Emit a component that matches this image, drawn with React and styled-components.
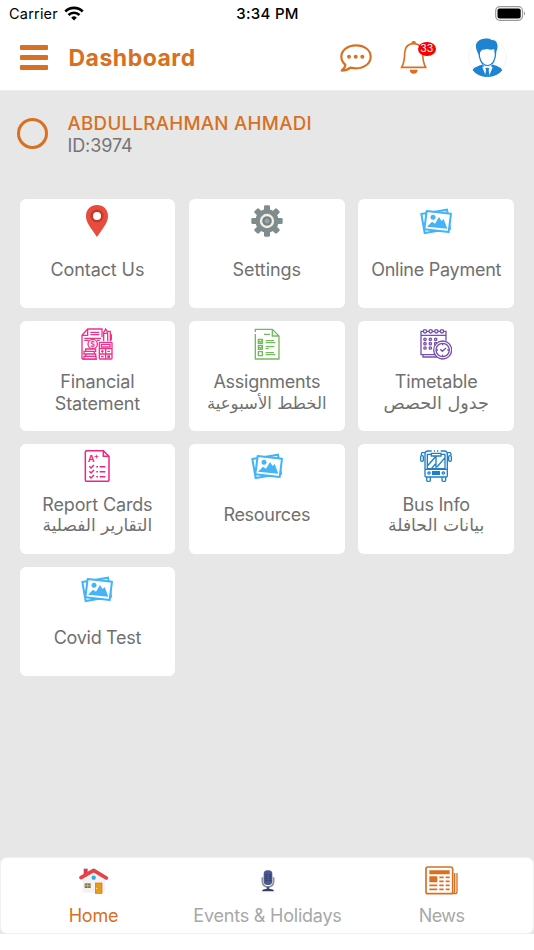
import React from 'react';
import styled, { createGlobalStyle } from 'styled-components';

const GlobalStyle = createGlobalStyle`
  * {
    box-sizing: border-box;
  }

  body {
    margin: 0;
    background: #fff;
    font-family: Inter, 'DejaVu Sans', sans-serif;
  }

  svg {
    display: block;
    flex-shrink: 0;
  }
`;

const orange = '#d77023';
const sky = '#45b3f7';

const Screen = styled.div`
  width: 534px;
  height: 950px;
  display: flex;
  flex-direction: column;
  background: #fff;
  overflow: hidden;
`;

const StatusBar = styled.div`
  height: 27px;
  padding: 0 8px 0 9px;
  display: grid;
  grid-template-columns: 1fr auto 1fr;
  align-items: center;
  font-size: 15px;
  color: #000;
`;

const Carrier = styled.div`
  display: flex;
  align-items: center;
  gap: 6px;
  font-size: 14.5px;
  letter-spacing: 0.2px;
`;

const Clock = styled.div`
  font-weight: 500;
  letter-spacing: 0.3px;
`;

const BatterySlot = styled.div`
  display: flex;
  justify-content: flex-end;
`;

const Header = styled.header`
  height: 64px;
  padding: 0 27.5px 2px 19.5px;
  display: flex;
  align-items: center;
  border-bottom: 1px solid #efefef;
`;

const MenuButton = styled.div`
  display: flex;
  flex-direction: column;
  gap: 5.4px;
  width: 28.5px;
  margin-right: 20.5px;

  span {
    height: 4.7px;
    border-radius: 1px;
    background: ${orange};
  }
`;

const Title = styled.h1`
  flex: 1;
  margin: 0;
  font-size: 23px;
  font-weight: 700;
  line-height: 28px;
  letter-spacing: 0.5px;
  color: ${orange};
`;

const BellButton = styled.div`
  position: relative;
  margin: 0 40px 0 27.5px;
`;

const Badge = styled.span`
  position: absolute;
  left: 18.5px;
  top: 0.5px;
  width: 17.5px;
  height: 14px;
  border-radius: 50%;
  background: #f90000;
  color: #fff;
  font-size: 10.5px;
  line-height: 14px;
  text-align: center;
`;

const Main = styled.main`
  flex: 1;
  background: #e7e7e7;
`;

const Profile = styled.div`
  height: 107.8px;
  padding: 20.5px 17px 0;
  display: flex;
  gap: 19.5px;
`;

const Ring = styled.div`
  width: 31px;
  height: 31px;
  margin-top: 6px;
  border: 3px solid ${orange};
  border-radius: 50%;
`;

const Name = styled.div`
  font-size: 18.7px;
  font-weight: 500;
  line-height: 23px;
  letter-spacing: 0.3px;
  color: ${orange};
`;

const StudentId = styled.div`
  font-size: 18px;
  line-height: 22px;
  letter-spacing: -0.1px;
  color: #757575;
`;

const Tiles = styled.div`
  padding: 0 19.5px;
  display: grid;
  grid-template-columns: repeat(3, 155.8px);
  grid-auto-rows: 109.6px;
  gap: 13px 13.6px;
`;

const Tile = styled.div`
  padding-top: 6.2px;
  display: flex;
  flex-direction: column;
  align-items: center;
  border-radius: 6px;
  background: #fff;
`;

const TileLabel = styled.div`
  height: 66px;
  display: flex;
  flex-direction: column;
  justify-content: center;
  text-align: center;
  font-size: 18px;
  line-height: 21.5px;
  letter-spacing: ${({ $tracking }) => $tracking || 0}px;
  color: #707070;
`;

const Arabic = styled.span`
  height: 21.5px;
  font-family: 'DejaVu Sans', sans-serif;
  font-size: ${({ $size }) => $size || 17}px;
  letter-spacing: 0;
  white-space: nowrap;
`;

const TabBar = styled.nav`
  height: 77.5px;
  margin-bottom: 16px;
  background: #e7e7e7;
`;

const TabSheet = styled.div`
  height: 100%;
  padding: 0 4.5px 0 5.5px;
  display: grid;
  grid-template-columns: repeat(3, 1fr);
  border: 1px solid #f1f1f1;
  border-radius: 7px;
  background: #fff;
`;

const Tab = styled.div`
  display: flex;
  flex-direction: column;
  align-items: center;
  font-size: 18px;
  line-height: 22px;
  letter-spacing: ${({ $tracking }) => $tracking || 0}px;
  color: ${({ $active }) => ($active ? orange : '#a8a8a8')};
`;

const TabIcon = styled.div`
  height: 47px;
  padding-bottom: 1px;
  display: flex;
  align-items: center;
`;

const Wifi = () => (
  <svg width="20" height="15" viewBox="0 0 20 15" fill="none" stroke="#000" strokeWidth="2.7">
    <path d="M1.3 5.5a12.4 12.4 0 0 1 17.4 0" />
    <path d="M4.5 9a7.9 7.9 0 0 1 11 0" />
    <path d="M7.2 11.7a4 4 0 0 1 5.6 0L10 14.5z" fill="#000" stroke="none" />
  </svg>
);

const Battery = () => (
  <svg width="31" height="15" viewBox="0 0 31 15">
    <rect x=".7" y=".7" width="26.8" height="13.6" rx="4" fill="none" stroke="#999" strokeWidth="1.2" />
    <rect x="2.5" y="2.5" width="23.2" height="10" rx="2" fill="#000" />
    <path d="M29 5.3q2 2.2 0 4.4z" fill="#888" />
  </svg>
);

const Chat = () => (
  <svg width="32" height="28" viewBox="0 0 96 84" fill={orange}>
    <path
      d="M48 4C23 4 4 19 4 38c0 10 5 18 12 24 0 7-5 13-11 18 11 0 19-3 26-9 5 1 11 2 17 2 25 0 44-15 44-35S73 4 48 4z"
      fill="none"
      stroke={orange}
      strokeWidth="6.5"
      strokeLinejoin="round"
    />
    <circle cx="27" cy="38" r="6" />
    <circle cx="47" cy="38" r="6" />
    <circle cx="67" cy="38" r="6" />
  </svg>
);

const Bell = () => (
  <svg width="28" height="33" viewBox="0 0 84 99">
    <path
      d="M5 79c7-13 9-24 9-43C15 18 25 8 41 8s26 10 27 28c0 19 2 30 9 43z"
      fill="none"
      stroke={orange}
      strokeWidth="5"
    />
    <path d="M34 7a7 7 0 0 1 14 0z" fill={orange} />
    <path d="M29 86h24q-1 12-12 12T29 86z" fill={orange} />
  </svg>
);

const Avatar = () => (
  <svg width="39" height="39" viewBox="0 0 117 117">
    <circle cx="58" cy="58" r="56" fill="#fff" stroke="#ededed" strokeWidth="2" />
    <path
      d="M31 48C23 32 20 20 29 11 39 1 60-1 71 6c15-2 22 15 15 32l-5 12-5-15c-13 3-27-2-35 1l-5 14z"
      fill="#1e83d0"
    />
    <path d="M33 43c0 20 8 39 25 39s25-19 25-39" fill="none" stroke="#1e83d0" strokeWidth="4" />
    <path d="M36 42q9-8 21-9 12 4 22 1v14q-2 32-20 32T36 49z" fill="#fff" />
    <path d="M14 97c3-9 15-12 31-18l13 10 13-10c18 6 28 9 32 18-22 26-66 28-89 0z" fill="#1e83d0" />
    <path d="M45 79l-2 9 11 27h9l11-27-3-9-13 10z" fill="#fff" />
    <path d="M52 90h12l-2 6 3 19H51l3-19zM45 80l-4 9 8-5zM72 80l4 9-8-5z" fill="#1e83d0" />
  </svg>
);

const TileSvg = ({ children, ...rest }) => (
  <svg width="32" height="32" viewBox="0 0 96 96" {...rest}>
    {children}
  </svg>
);

const Pin = () => (
  <TileSvg>
    <path d="M48 0C29 0 15 14 15 32c0 16 7 26 19 44l14 20 14-20c12-18 19-28 19-44C81 14 67 0 48 0z" fill="#e74c3c" />
    <circle cx="48" cy="33" r="19.5" fill="#c1392c" />
    <circle cx="48" cy="33" r="12" fill="#fff" />
  </TileSvg>
);

const Gear = () => (
  <TileSvg fill="#7f8c8d">
    {[0, 45, 90, 135].map(angle => (
      <rect key={angle} x="39" y="1" width="18" height="94" rx="4" transform={`rotate(${angle} 48 48)`} />
    ))}
    <circle cx="48" cy="48" r="35" />
    <circle cx="48" cy="48" r="18" fill="none" stroke="#f3efe2" strokeWidth="7" />
    <circle cx="48" cy="48" r="12" fill="#737f82" />
    <circle cx="48" cy="48" r="7.5" fill="#95a5a5" />
  </TileSvg>
);

const Photos = () => (
  <TileSvg fill="none" stroke={sky} strokeWidth="6">
    <path d="M4 27L81 14l9 57-76 13z" />
    <path d="M20 18l73 8-7 55-73-8z" fill="#fff" strokeLinejoin="round" />
    <circle cx="39" cy="37" r="7.5" fill={sky} stroke="none" />
    <path d="M21 65l15-15 9 6 12-20 8 12 6-6 11 29z" fill={sky} stroke="none" />
  </TileSvg>
);

const Finance = () => (
  <TileSvg fill="none" stroke="#f0318c" strokeWidth="4">
    <path d="M3 93V22L20 3h43v24M3 22h17V3M3 93h45M28 13h27M28 20h27M10 31h50M10 37h13M48 37h8" />
    <circle cx="35" cy="48" r="14" fill="#fff" />
    <text x="35" y="56" fontSize="22" fontWeight="600" fill="#f0318c" stroke="none" textAnchor="middle">$</text>
    <path d="M14 63h30v7H14zM9 70h31v8H9zM14 78h30v7H14zM9 85h36v8H9z" fill="#fff" />
    <path d="M68 40V13l6-10 6 10v27M80 10h8v30M68 16h12M91 19v18" />
    <rect x="55" y="43" width="38" height="50" rx="2" fill="#fff" />
    <path d="M61 49h26v8H61zM55 62h38M74 62v31M55 78h38M60 70h8M64 66v8M79 70h8M60 86h8M79 84h8M79 88h8" />
  </TileSvg>
);

const Checklist = () => (
  <TileSvg fill="none" stroke="#73ba5d" strokeWidth="4">
    <path d="M13 12V4h51l20 20v69H13V18M64 4v20h20M39 19h18" />
    <path d="M22 34h12v12H22zM22 52h12v12H22zM22 71h12v12H22z" />
    <path d="M23 38l5 5 8-9M23 56l5 5 8-9M44 38h25M44 44h29M44 56h26M44 62h9M44 74h25M44 80h29" />
  </TileSvg>
);

const Calendar = () => (
  <TileSvg fill="none" stroke="#7650ad" strokeWidth="4">
    <path d="M78 38V10H3v70h46M3 22h75M9 81v6h47" />
    {[15, 32, 49, 66].map(x => (
      <circle key={x} cx={x} cy="10" r="5" fill="#fff" />
    ))}
    {[34, 47, 60].map(y =>
      [15, 31, 47].map(x => <circle key={`${x}-${y}`} cx={x} cy={y} r="3.6" />)
    )}
    <circle cx="68" cy="66" r="27" fill="#fff" />
    <circle cx="68" cy="66" r="20" />
    <path d="M61 64l6 6 11-10M68 46v6M68 80v6M48 66h6M82 66h6" />
  </TileSvg>
);

const Report = () => (
  <TileSvg fill="none" stroke="#ef2585" strokeWidth="4.5">
    <path d="M17 2h50l17 17v71q0 4-4 4H17q-4 0-4-4V6q0-4 4-4zM67 2v17h17" />
    <text x="21" y="35" fontSize="27" fontWeight="700" fill="#ef2585" stroke="none">A</text>
    <text x="39" y="27" fontSize="22" fontWeight="700" fill="#ef2585" stroke="none">+</text>
    {[49, 64, 79].map(y => (
      <path key={y} d={`M25 ${y}l5 5 9-9M46 ${y + 1}h5M56 ${y + 1}h17`} />
    ))}
  </TileSvg>
);

const Bus = () => (
  <TileSvg fill="none" stroke="#1c81c8" strokeWidth="4">
    <path d="M35 3H24q-9 0-9 9v65q0 4 4 4h59q4 0 4-4V12q0-9-9-9H62M42 3h3M51 3h4" />
    <path d="M34 10h29v8H34zM34 13H22v43h53V13H63M48 18v38M15 58h67M22 48l24-27M35 55l11-13M51 51l22-26" />
    <path d="M15 8H7q-3 0-3 8M82 8h8q3 0 3 8" />
    <rect x="2" y="17" width="8" height="17" rx="3" />
    <rect x="86" y="17" width="8" height="17" rx="3" />
    <circle cx="27" cy="69" r="3.5" />
    <circle cx="70" cy="69" r="3.5" />
    <path d="M38 65h20v8H38zM38 69h20M20 81v10q0 3 3 3h5q3 0 3-3V81M66 81v10q0 3 3 3h5q3 0 3-3V81" />
  </TileSvg>
);

const House = () => (
  <svg width="30" height="27" viewBox="0 0 90 81">
    <path d="M11 36L44 13l34 23v41H11z" fill="#f3f2f5" />
    <path d="M14 5h12v20H14z" fill="#dc3c42" />
    <path d="M6 32L44 10l38 23" fill="none" stroke="#e3444a" strokeWidth="11" strokeLinecap="round" strokeLinejoin="round" />
    <circle cx="44" cy="32" r="6.5" fill="#35a8dc" />
    <rect x="17" y="49" width="18" height="14" fill="#87753f" />
    <path d="M18 56h16M26 50v12" stroke="#d7cda3" strokeWidth="2" />
    <rect x="49" y="48" width="20" height="31" fill="#e79a1c" stroke="#c8790e" strokeWidth="2" />
    <circle cx="53" cy="64" r="2" fill="#fff1a8" />
  </svg>
);

const Mic = () => (
  <svg width="14" height="22" viewBox="0 0 42 66">
    <path d="M4 22v12q0 17 17 17t17-17V22" fill="none" stroke="#8e91a0" strokeWidth="5" />
    <rect x="8" y="1" width="26" height="44" rx="11" fill="#4b5a92" />
    <path d="M13 14h7M13 20h7M13 26h7M13 32h7M24 14h7M24 20h7M24 26h7M24 32h7" stroke="#29345f" strokeWidth="2.5" />
    <path d="M21 50v10" stroke="#4b506a" strokeWidth="8" />
    <path d="M2 64q3-7 12-7h14q9 0 12 7z" fill="#343d6b" />
  </svg>
);

const Newspaper = () => (
  <svg width="33" height="29" viewBox="0 0 99 87" fill="none" stroke={orange} strokeWidth="5">
    <rect x="3" y="3" width="80" height="80" rx="6" />
    <path d="M78 83h12q6 0 6-6V21M89 21v54q0 8-6 8" strokeWidth="4" />
    <path d="M13 13h61v12H13zM13 31h24v18H13z" fill={orange} stroke="none" />
    <path d="M43 34h13M62 34h12M43 46h13M62 46h12M13 58h24M43 58h13M62 58h12M13 70h24M43 70h13M62 70h12" />
  </svg>
);

const tiles = [
  { icon: Pin, label: 'Contact Us', tracking: -0.1 },
  { icon: Gear, label: 'Settings', tracking: -0.05 },
  { icon: Photos, label: 'Online Payment', tracking: -0.25 },
  { icon: Finance, label: 'Financial', second: 'Statement', tracking: -0.15 },
  { icon: Checklist, label: 'Assignments', arabic: 'الخطط الأسبوعية', tracking: -0.25, size: 16.5 },
  { icon: Calendar, label: 'Timetable', arabic: 'جدول الحصص', tracking: -0.15, size: 17.6 },
  { icon: Report, label: 'Report Cards', arabic: 'التقارير الفصلية', tracking: -0.15 },
  { icon: Photos, label: 'Resources', tracking: -0.3 },
  { icon: Bus, label: 'Bus Info', arabic: 'بيانات الحافلة', tracking: -0.25, size: 17.2 },
  { icon: Photos, label: 'Covid Test', tracking: -0.3 },
];

const tabs = [
  { icon: House, label: 'Home', active: true, tracking: -0.2 },
  { icon: Mic, label: 'Events & Holidays', tracking: -0.22 },
  { icon: Newspaper, label: 'News', tracking: -0.6 },
];

const App = () => (
  <Screen>
    <GlobalStyle />
    <StatusBar>
      <Carrier>
        Carrier
        <Wifi />
      </Carrier>
      <Clock>3:34 PM</Clock>
      <BatterySlot>
        <Battery />
      </BatterySlot>
    </StatusBar>

    <Header>
      <MenuButton>
        <span />
        <span />
        <span />
      </MenuButton>
      <Title>Dashboard</Title>
      <Chat />
      <BellButton>
        <Bell />
        <Badge>33</Badge>
      </BellButton>
      <Avatar />
    </Header>

    <Main>
      <Profile>
        <Ring />
        <div>
          <Name>ABDULLRAHMAN AHMADI</Name>
          <StudentId>ID:3974</StudentId>
        </div>
      </Profile>
      <Tiles>
        {tiles.map(({ icon: Icon, label, second, arabic, tracking, size }) => (
          <Tile key={label}>
            <Icon />
            <TileLabel $tracking={tracking}>
              <span>{label}</span>
              {second && <span>{second}</span>}
              {arabic && (
                <Arabic $size={size} dir="rtl" lang="ar">
                  {arabic}
                </Arabic>
              )}
            </TileLabel>
          </Tile>
        ))}
      </Tiles>
    </Main>

    <TabBar>
      <TabSheet>
        {tabs.map(({ icon: Icon, label, active, tracking }) => (
          <Tab key={label} $active={active} $tracking={tracking}>
            <TabIcon>
              <Icon />
            </TabIcon>
            {label}
          </Tab>
        ))}
      </TabSheet>
    </TabBar>
  </Screen>
);

export default App;
